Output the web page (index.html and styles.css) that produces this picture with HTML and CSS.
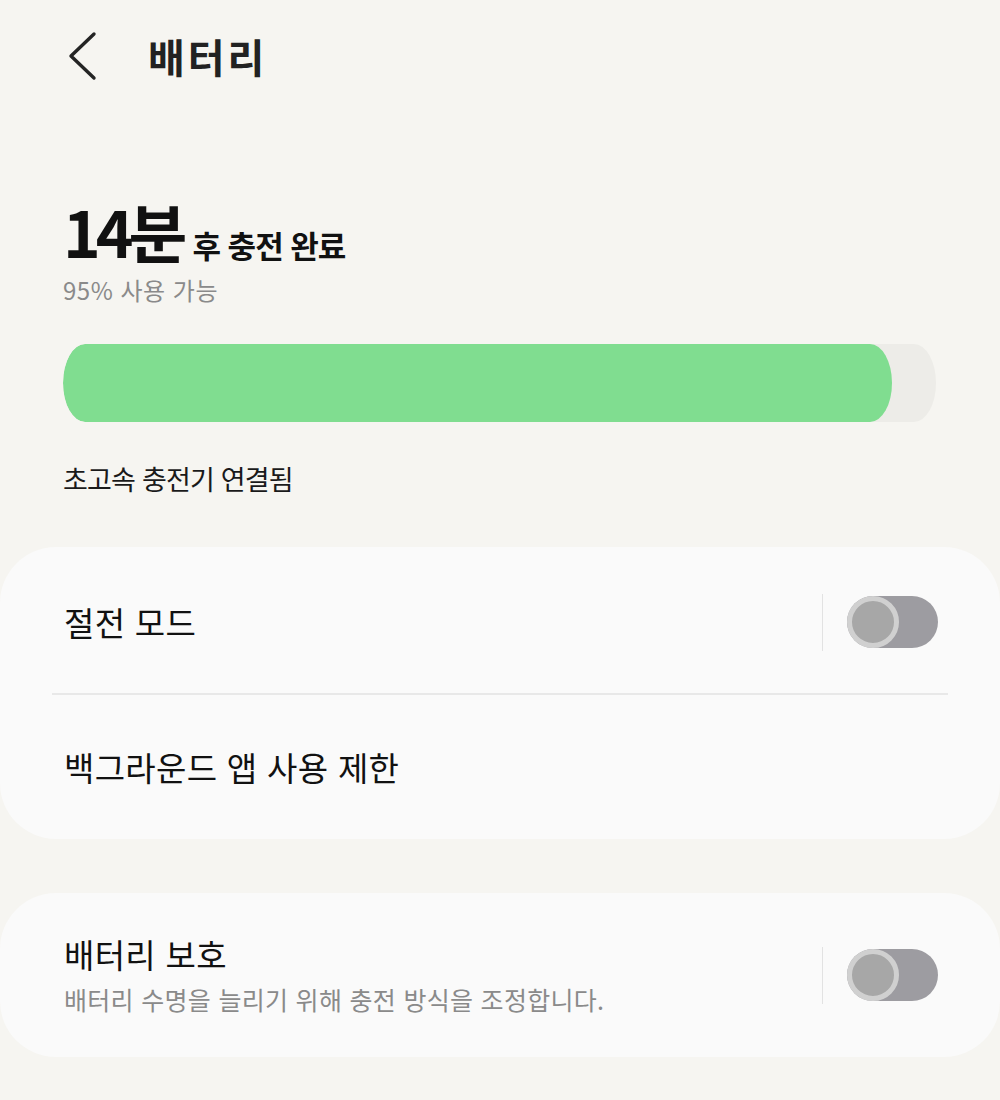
FILE: index.html
```html
<!DOCTYPE html>
<html lang="ko">
<head>
<meta charset="utf-8">
<link rel="stylesheet" href="styles.css">
</head>
<body>
<div class="page">
  <header class="topbar">
    <svg class="back" width="32" height="50" viewBox="0 0 32 50"><path d="M28 3 L5 25 L28 47" fill="none" stroke="#242424" stroke-width="3.4" stroke-linecap="round" stroke-linejoin="round"/></svg>
    <h1 class="title">배터리</h1>
  </header>

  <section class="status">
    <div class="headline"><span class="big">14분</span><span class="rest">후 충전 완료</span></div>
    <div class="avail">95% 사용 가능</div>
    <div class="bar"><div class="fill" style="width:95%"></div></div>
    <div class="charger">초고속 충전기 연결됨</div>
  </section>

  <section class="card card-1">
    <div class="row">
      <div class="label">절전 모드</div>
      <div class="sep"></div>
      <div class="toggle"><div class="thumb"></div></div>
    </div>
    <div class="divider"></div>
    <div class="row row-plain">
      <div class="label">백그라운드 앱 사용 제한</div>
    </div>
  </section>

  <section class="card card-2">
    <div class="row">
      <div class="texts">
        <div class="label">배터리 보호</div>
        <div class="sub">배터리 수명을 늘리기 위해 충전 방식을 조정합니다.</div>
      </div>
      <div class="sep"></div>
      <div class="toggle"><div class="thumb"></div></div>
    </div>
  </section>
</div>
</body>
</html>
```
FILE: styles.css
```css
* { box-sizing: border-box; margin: 0; padding: 0; }
html, body { background: #f6f5f1; }
body {
  width: 1000px;
  height: 1100px;
  overflow: hidden;
  font-family: "Noto Sans CJK KR", "Noto Sans", sans-serif;
  color: #111;
}
.page { padding-top: 30px; }
.topbar {
  display: flex;
  align-items: center;
  height: 52px;
  padding-left: 66px;
}
.back { display: block; }
.title {
  margin-left: 50px;
  font-size: 40px;
  font-weight: 700;
  color: #222;
  letter-spacing: 3px;
  line-height: 52px;
}
.status { padding: 0 63px 0 63px; margin-top: 104px; }
.headline {
  display: flex;
  align-items: baseline;
  line-height: 88px;
  height: 88px;
}
.big { font-size: 64px; font-weight: 700; letter-spacing: -5px; color: #111; }
.rest { font-size: 31px; font-weight: 700; margin-left: 10px; letter-spacing: -1px; color: #111; }
.avail {
  font-size: 24px;
  color: #8a8a8a;
  line-height: 32px;
  letter-spacing: 0.5px;
}
.bar {
  margin-top: 38px;
  width: 873px;
  height: 78px;
  background: #edece8;
  border-radius: 22px / 39px;
  overflow: hidden;
}
.fill {
  height: 100%;
  background: #80dd90;
  border-radius: 22px / 39px;
}
.charger {
  margin-top: 38px;
  font-size: 27px;
  color: #1a1a1a;
  line-height: 38px;
  letter-spacing: -0.8px;
}
.card {
  background: #fafafa;
  border-radius: 56px;
}
.card-1 { margin-top: 49px; height: 292px; padding-top: 4px; }
.card-2 { margin-top: 54px; height: 164px; }
.row {
  display: flex;
  align-items: center;
  padding: 0 62px 0 64px;
  height: 142px;
}
.row-plain { height: 144px; }
.card-2 .row { height: 164px; }
.label {
  flex: 1;
  font-size: 33px;
  color: #111;
  letter-spacing: 0.3px;
  line-height: 40px;
}
.texts { flex: 1; }
.sub {
  font-size: 25px;
  color: #8a8a8a;
  letter-spacing: 0.3px;
  line-height: 34px;
  margin-top: 8px;
}
.sep {
  width: 1.5px;
  height: 57px;
  background: #e2e2e2;
  margin-right: 24px;
}
.toggle {
  width: 91px;
  height: 52px;
  border-radius: 26px;
  background: #9d9ca1;
  position: relative;
}
.thumb {
  width: 52px;
  height: 52px;
  border-radius: 50%;
  background: #a7a7a7;
  border: 5px solid #d0d0d0;
}
.divider {
  height: 2px;
  background: #e8e8e8;
  margin: 0 52px;
}
```
